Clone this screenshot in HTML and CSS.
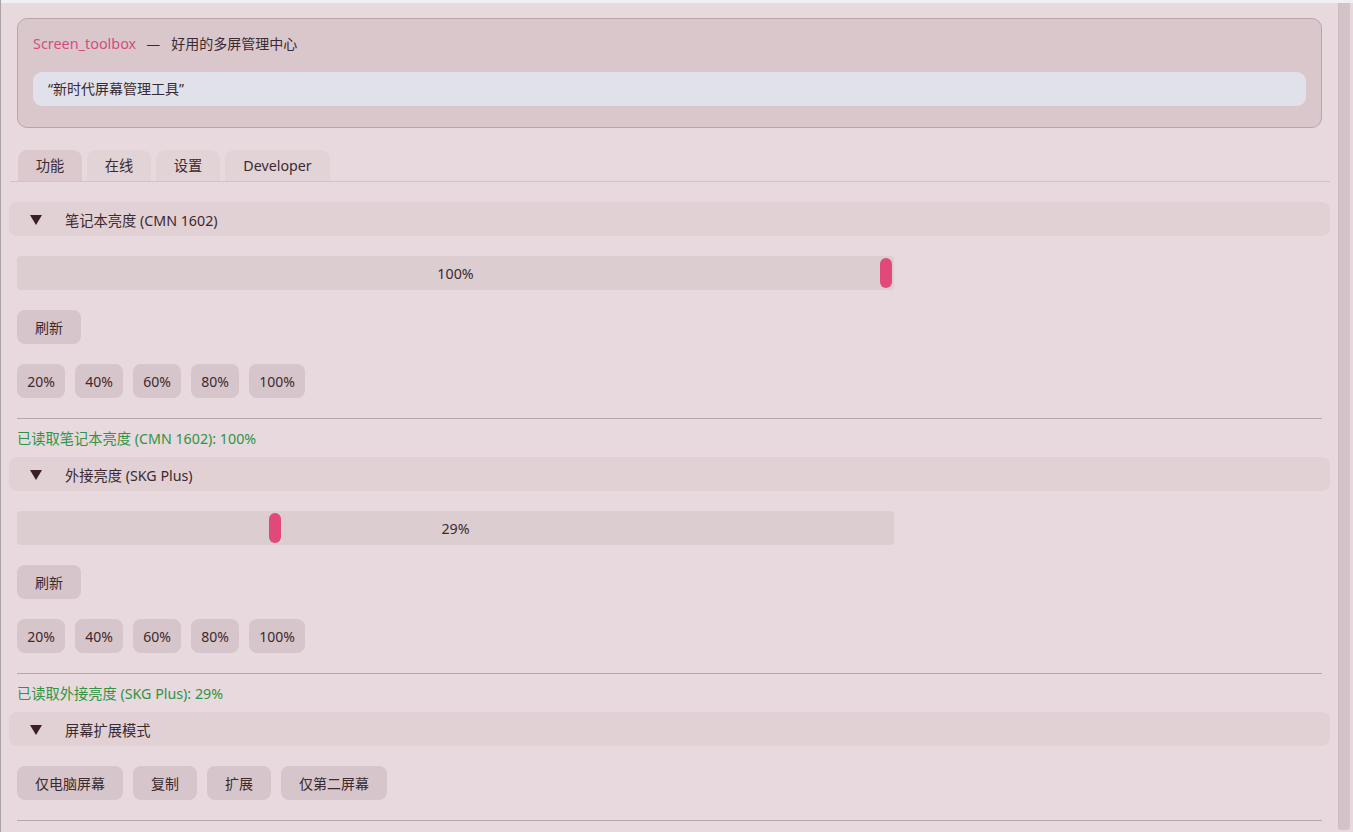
FILE: index.html
```html
<!DOCTYPE html>
<html lang="zh">
<head>
<meta charset="utf-8">
<title>Screen_toolbox</title>
<link rel="stylesheet" href="styles.css">
</head>
<body>
<div class="window">
  <div class="topstrip"></div>
  <div class="app">
    <main class="main">
      <section class="card">
        <div class="title"><span class="brand">Screen_toolbox</span><span class="dash">—</span><span>好用的多屏管理中心</span></div>
        <div class="quote">“新时代屏幕管理工具”</div>
      </section>

      <nav class="tabs">
        <div class="tab active">功能</div>
        <div class="tab">在线</div>
        <div class="tab">设置</div>
        <div class="tab wide">Developer</div>
      </nav>

      <div class="block">
        <div class="sec-head"><svg class="tri" width="12" height="10" viewBox="0 0 12 10"><polygon points="0,0 12,0 6,10"/></svg><span>笔记本亮度 (CMN 1602)</span></div>
        <div class="slider"><span class="val">100%</span><div class="thumb" style="left: calc(2px + (100% - 16px) * 1.00)"></div></div>
        <div class="row"><button class="btn">刷新</button></div>
        <div class="row">
          <button class="btn sm">20%</button><button class="btn sm">40%</button><button class="btn sm">60%</button><button class="btn sm">80%</button><button class="btn md">100%</button>
        </div>
        <hr class="sep">
        <div class="status">已读取笔记本亮度 (CMN 1602): 100%</div>
      </div>

      <div class="block">
        <div class="sec-head"><svg class="tri" width="12" height="10" viewBox="0 0 12 10"><polygon points="0,0 12,0 6,10"/></svg><span>外接亮度 (SKG Plus)</span></div>
        <div class="slider"><span class="val">29%</span><div class="thumb" style="left: calc(2px + (100% - 16px) * 0.29)"></div></div>
        <div class="row"><button class="btn">刷新</button></div>
        <div class="row">
          <button class="btn sm">20%</button><button class="btn sm">40%</button><button class="btn sm">60%</button><button class="btn sm">80%</button><button class="btn md">100%</button>
        </div>
        <hr class="sep">
        <div class="status">已读取外接亮度 (SKG Plus): 29%</div>
      </div>

      <div class="block">
        <div class="sec-head"><svg class="tri" width="12" height="10" viewBox="0 0 12 10"><polygon points="0,0 12,0 6,10"/></svg><span>屏幕扩展模式</span></div>
        <div class="row mode">
          <button class="btn">仅电脑屏幕</button><button class="btn">复制</button><button class="btn">扩展</button><button class="btn">仅第二屏幕</button>
        </div>
        <hr class="sep last">
      </div>
    </main>
    <div class="scrollbar"></div>
  </div>
</div>
</body>
</html>
```

FILE: styles.css
```css
* { box-sizing: border-box; }
html, body { margin: 0; padding: 0; }
body {
  width: 1353px;
  height: 832px;
  overflow: hidden;
  background: #e7d9dd;
  font-family: "Noto Sans", "Noto Sans CJK SC", sans-serif;
  font-size: 14.25px;
  color: #3b2a31;
}
.window {
  height: 832px;
  border-left: 1px solid #a9a3a6;
  display: flex;
  flex-direction: column;
}
.topstrip {
  height: 3px;
  background: #eef0f4;
  flex: none;
}
.app {
  flex: 1;
  display: flex;
  overflow: hidden;
}
.main {
  width: 1321px;
  margin-left: 8px;
  padding-top: 15px;
  display: flex;
  flex-direction: column;
}
.card {
  margin: 0 8px;
  height: 110px;
  border: 1px solid #bba5ac;
  border-radius: 10px;
  background: #d9c7cc;
  padding: 13px 15px 0;
}
.title {
  height: 24px;
  line-height: 24px;
  font-size: 14px;
  display: flex;
  align-items: center;
}
.brand {
  color: #d44d7e;
  font-size: 14.4px;
}
.dash {
  margin: 0 11px 0 10px;
  font-family: "DejaVu Sans", sans-serif;
  font-size: 14px;
}
.quote {
  margin-top: 16px;
  height: 34px;
  line-height: 34px;
  border-radius: 9px;
  background: #e0e1ea;
  padding-left: 15px;
  font-size: 14px;
}
.tabs {
  margin: 22px 0 0 1px;
  padding-left: 8px;
  display: flex;
  gap: 5px;
  border-bottom: 1px solid #d3c2c7;
}
.tab {
  width: 64px;
  height: 31px;
  line-height: 31px;
  text-align: center;
  border-radius: 9px 9px 0 0;
  background: #e2d3d7;
}
.tab.active { background: #dcc9ce; }
.tab.wide { width: 105px; }
.block {
  display: flex;
  flex-direction: column;
  gap: 20px;
  margin-top: 20px;
}
.block + .block { margin-top: 9px; }
.sec-head {
  height: 34px;
  border-radius: 8px;
  background: #e1d1d5;
  display: flex;
  align-items: center;
  padding-left: 21px;
}
.tri { fill: #3a1f29; margin-right: 23px; margin-top: 1px; }
.slider {
  position: relative;
  margin-left: 8px;
  width: 877px;
  height: 34px;
  background: #dccdd1;
  border-radius: 4px;
  display: flex;
  align-items: center;
  justify-content: center;
}
.thumb {
  position: absolute;
  top: 2px;
  width: 12px;
  height: 30px;
  border-radius: 6px;
  background: #e04a79;
}
.row {
  margin-left: 8px;
  display: flex;
  gap: 10px;
}
.btn {
  font-family: inherit;
  font-size: 14px;
  color: inherit;
  border: none;
  height: 34px;
  padding: 0 18px;
  border-radius: 8px;
  background: #d6c5ca;
}
.btn.sm { width: 48px; padding: 0; }
.btn.md { width: 56px; padding: 0; }
.sep {
  margin: 0 8px 0 8px;
  border: none;
  border-top: 1px solid #b9a6ab;
  height: 0;
}
.status {
  margin: -10px 0 0 8px;
  color: #2f9446;
  height: 20px;
  line-height: 20px;
}
.block + .block .sec-head { margin-top: -1px; }
.scrollbar {
  width: 12px;
  margin-left: 8px;
  background: #d3c3c8;
  border-left: 1px solid #cdbcc1;
  border-radius: 0 0 4px 4px;
  margin-bottom: 2px;
}
```
